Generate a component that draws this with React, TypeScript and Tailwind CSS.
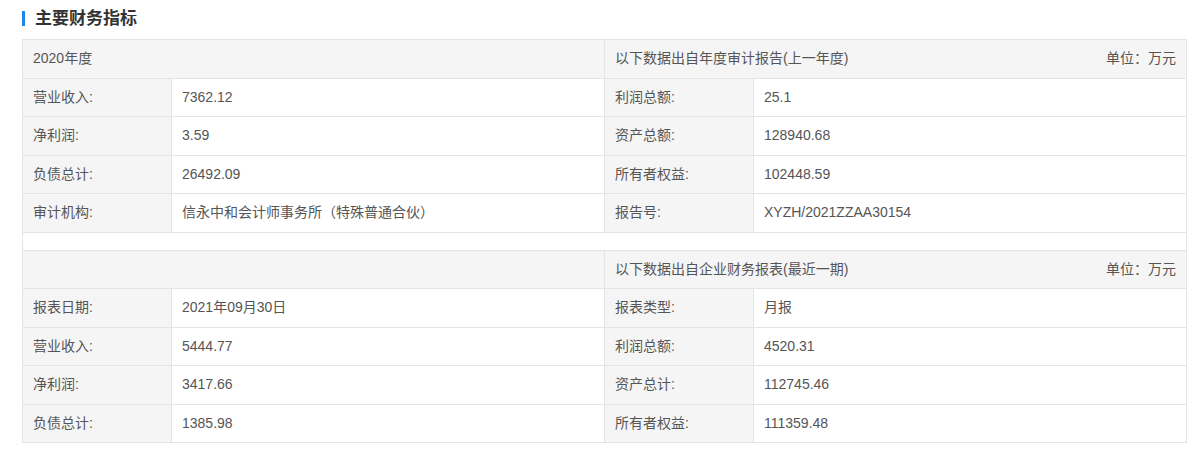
import React from "react";

type Row = [string, string, string, string];

const yearRows: Row[] = [
  ["营业收入:", "7362.12", "利润总额:", "25.1"],
  ["净利润:", "3.59", "资产总额:", "128940.68"],
  ["负债总计:", "26492.09", "所有者权益:", "102448.59"],
  ["审计机构:", "信永中和会计师事务所（特殊普通合伙）", "报告号:", "XYZH/2021ZZAA30154"],
];

const recentRows: Row[] = [
  ["报表日期:", "2021年09月30日", "报表类型:", "月报"],
  ["营业收入:", "5444.77", "利润总额:", "4520.31"],
  ["净利润:", "3417.66", "资产总计:", "112745.46"],
  ["负债总计:", "1385.98", "所有者权益:", "111359.48"],
];

const label = "h-[38.5px] border border-[#e4e4e4] bg-[#f5f5f5] px-[10px] text-left font-normal";
const value = "h-[38.5px] border border-[#e4e4e4] bg-white px-[10px] text-left";

function HeadRow({ left, right }: { left: string; right: string }) {
  return (
    <tr>
      <td colSpan={2} className={label}>
        {left}
      </td>
      <td colSpan={2} className={label}>
        <div className="flex items-center justify-between">
          <span>{right}</span>
          <span>单位：万元</span>
        </div>
      </td>
    </tr>
  );
}

function DataRows({ rows }: { rows: Row[] }) {
  return (
    <>
      {rows.map((r, i) => (
        <tr key={i}>
          <td className={label}>{r[0]}</td>
          <td className={value}>{r[1]}</td>
          <td className={label}>{r[2]}</td>
          <td className={value}>{r[3]}</td>
        </tr>
      ))}
    </>
  );
}

export default function App() {
  return (
    <div
      className="min-h-[456px] bg-white px-[22px] pt-[9px] text-[14px] text-[#555]"
      style={{ fontFamily: '"Liberation Sans", "Noto Sans CJK SC", sans-serif' }}
    >
      {/* section title */}
      <div className="flex items-center h-[18px]">
        <span className="w-[3px] h-[15px] bg-[#1e88e5]"></span>
        <h2 className="ml-[10px] text-[17px] font-bold text-[#333] leading-none">主要财务指标</h2>
      </div>

      <table className="mt-[12px] w-[1164px] table-fixed border-collapse">
        <colgroup>
          <col className="w-[149px]" />
          <col className="w-[433px]" />
          <col className="w-[149px]" />
          <col className="w-[433px]" />
        </colgroup>
        <tbody>
          <HeadRow left="2020年度" right="以下数据出自年度审计报告(上一年度)" />
          <DataRows rows={yearRows} />
          <tr>
            <td colSpan={4} className="h-[18px] border border-[#e4e4e4] bg-white p-0"></td>
          </tr>
          <HeadRow left="" right="以下数据出自企业财务报表(最近一期)" />
          <DataRows rows={recentRows} />
        </tbody>
      </table>
    </div>
  );
}
